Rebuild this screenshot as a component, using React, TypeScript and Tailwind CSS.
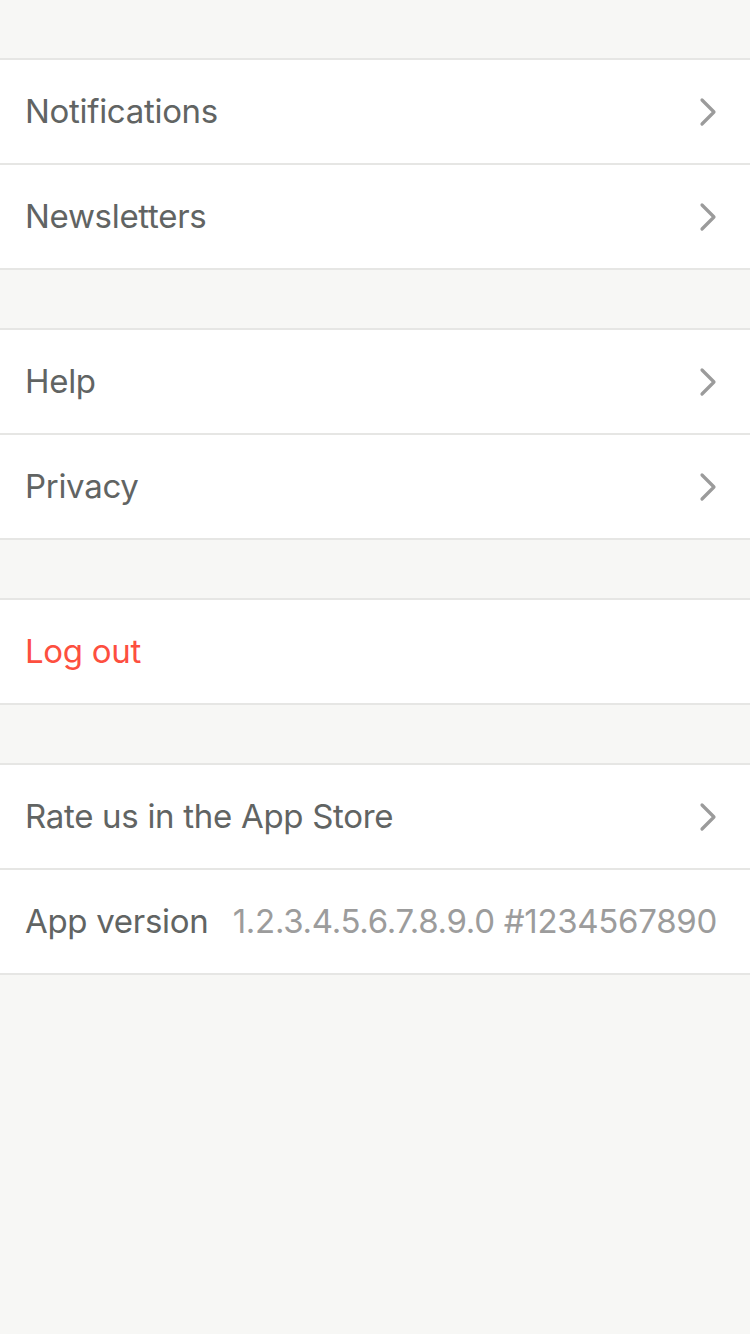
import React from "react";

interface Row {
  label: string;
  value?: string;
  danger?: boolean;
  chevron?: boolean;
}

const groups: Row[][] = [
  [
    { label: "Notifications", chevron: true },
    { label: "Newsletters", chevron: true },
  ],
  [
    { label: "Help", chevron: true },
    { label: "Privacy", chevron: true },
  ],
  [{ label: "Log out", danger: true }],
  [
    { label: "Rate us in the App Store", chevron: true },
    { label: "App version", value: "1.2.3.4.5.6.7.8.9.0 #1234567890" },
  ],
];

const Chevron = () => (
  <svg width="20" height="30" viewBox="0 0 20 30" fill="none" className="shrink-0 mr-[-1px]">
    <path
      d="M4 3 L16 15 L4 27"
      stroke="#9b9b9b"
      strokeWidth="3.2"
      strokeLinecap="round"
      strokeLinejoin="round"
    />
  </svg>
);

const App = () => {
  return (
    <div
      className="min-h-screen bg-[#f7f7f5] pt-[58px] flex flex-col gap-[58px]"
      style={{ fontFamily: "Inter, 'Noto Sans', sans-serif" }}
    >
      {groups.map((group, gi) => (
        <div className="bg-white border-t-2 border-[#e6e6e4]" key={gi}>
          {group.map((row, ri) => (
            <div
              className="h-[105px] border-b-2 border-[#e6e6e4] flex items-center justify-between pl-[25px] pr-[33px]"
              key={ri}
            >
              <span
                className={
                  "text-[33px] tracking-[-0.3px] " +
                  (row.danger ? "text-[#fd4f3f]" : "text-[#616463]")
                }
              >
                {row.label}
              </span>
              {row.value && (
                <span className="text-[33px] tracking-[-0.3px] text-[#9c9c9c]">
                  {row.value}
                </span>
              )}
              {row.chevron && <Chevron />}
            </div>
          ))}
        </div>
      ))}
    </div>
  );
};

export default App;
